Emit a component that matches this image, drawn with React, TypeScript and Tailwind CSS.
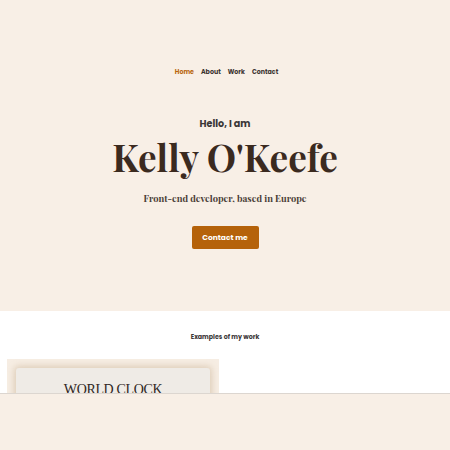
export default function App() {
  const sans = { fontFamily: "Poppins, Inter, 'Noto Sans', sans-serif" };
  const serif = { fontFamily: "'Playfair Display', 'DejaVu Serif', 'Liberation Serif', serif" };
  return (
    <div className="relative h-[450px] w-[450px] overflow-hidden bg-white">
      <section className="flex h-[311px] flex-col items-center bg-[#f8efe6]">
        <nav className="mt-[67px] ml-[3px] flex gap-[7px] text-[6.3px] font-bold text-[#3b3330]" style={sans}>
          <a className="text-[#b8660f]">Home</a>
          <a>About</a>
          <a>Work</a>
          <a>Contact</a>
        </nav>
        <p className="mt-[41px] text-[9.6px] font-bold text-[#3a3636]" style={sans}>Hello, I am</p>
        <h1 className="mt-[3px] text-[37px] font-bold leading-[44px] text-[#3b2a1f]" style={serif}>Kelly O'Keefe</h1>
        <p className="mt-[12px] text-[9.4px] font-bold text-[#4a3d36]" style={serif}>Front-end developer, based in Europe</p>
        <button className="mt-[21px] flex h-[23px] w-[67px] items-center justify-center rounded-[2px] bg-[#b5620a] text-[7.5px] font-bold text-white" style={sans}>Contact me</button>
      </section>
      <section className="flex flex-col items-center bg-white">
        <p className="mt-[21px] text-[6.3px] font-bold text-[#3a3636]" style={sans}>Examples of my work</p>
        <div className="mt-[18px] self-start ml-[7px] w-[212px] bg-[#f6ede3] px-[9px] pt-[9px] pb-[20px]">
          <div className="flex h-[80px] flex-col items-center rounded-[3px] bg-[#efebe6] shadow-[0_0_6px_2px_rgba(180,150,110,0.35)]">
            <p className="mt-[11px] text-[14px] text-[#2e2622] tracking-tight" style={{ fontFamily: "'Liberation Serif', serif" }}>WORLD CLOCK</p>
          </div>
        </div>
      </section>
      <div className="absolute bottom-0 left-0 h-[57px] w-full border-t border-[#dcd6d0] bg-[#f8efe6]" />
    </div>
  );
}
